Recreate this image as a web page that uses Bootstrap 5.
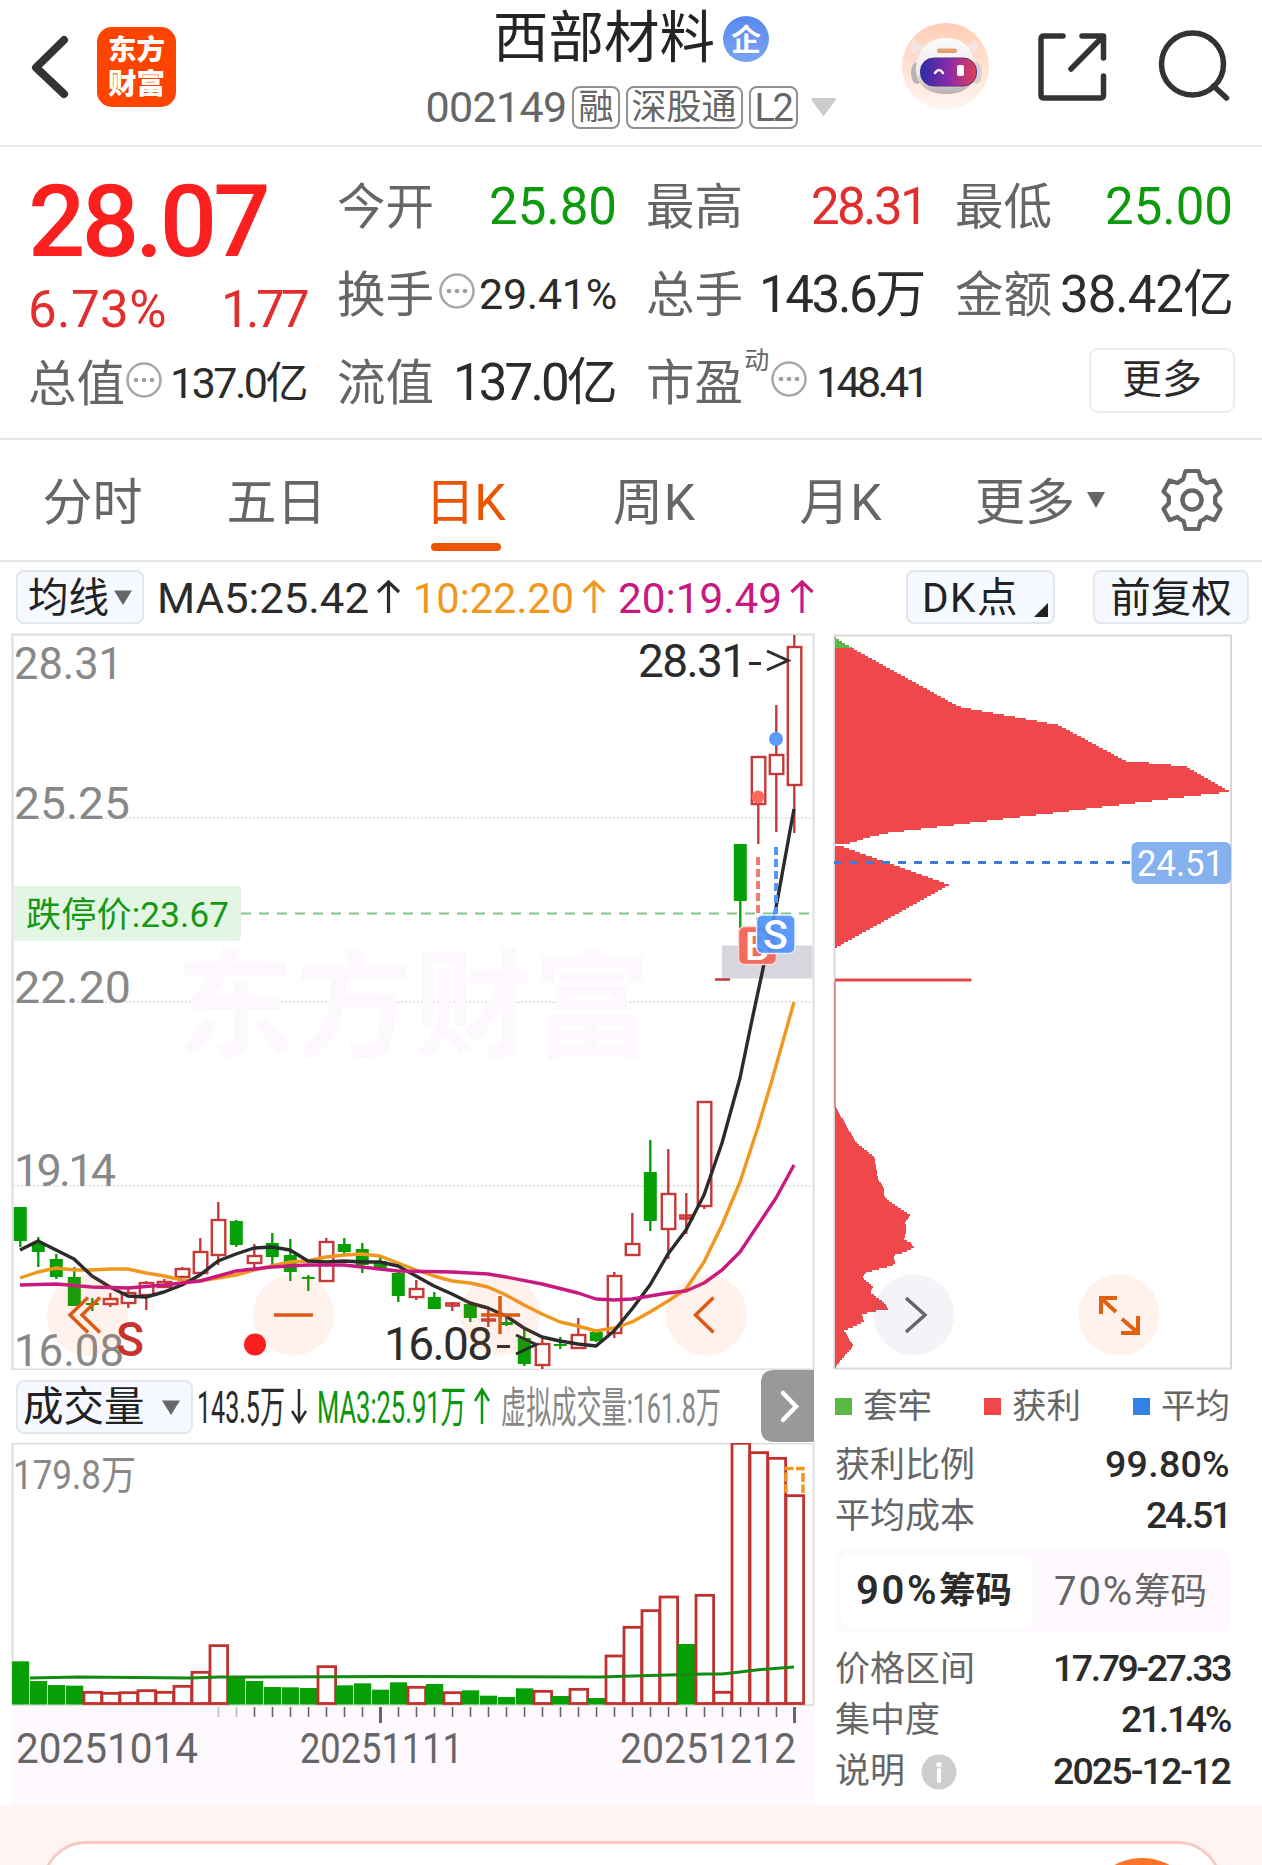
<!DOCTYPE html>
<html lang="zh-CN">
<head>
<meta charset="utf-8">
<meta name="viewport" content="width=device-width, initial-scale=1">
<title>西部材料 002149</title>
<link rel="stylesheet" href="https://cdn.jsdelivr.net/npm/bootstrap@5.3.0/dist/css/bootstrap.min.css">
<script src="https://cdn.jsdelivr.net/npm/bootstrap@5.3.0/dist/js/bootstrap.bundle.min.js"></script>
<style>
body{width:1262px;height:1865px;overflow:hidden;background:#fff;color:#2b2b2b;font-family:Roboto,"Noto Sans CJK SC",sans-serif;line-height:1}
svg{display:block;flex:none}
svg text{font-family:Roboto,"Noto Sans CJK SC",sans-serif}
.num{white-space:nowrap;display:inline-block}
.topbar{height:147px;border-bottom:2px solid #e9e9e9;display:grid;grid-template-columns:430px 402px 1fr}
.top-left{padding:0 0 12px 30px}
.top-mid{padding-top:9px}
.brand{width:79px;height:80px;border-radius:15px;background:#ff4400;color:#fff;font-weight:900;font-size:28.5px;line-height:34px;padding-top:2px}
.stock-name{font-size:55.5px;line-height:60px;color:#242424}
.corp{width:46px;height:46px;border-radius:50%;background:linear-gradient(#5788ee,#7ba4f1);color:#fff;font-size:30px;font-weight:700;padding-top:2px}
.name-row{gap:8px}
.code-row{margin-top:17px;gap:6px}
.stock-code{font-size:43px;color:#666}
.flag{height:43px;border:2px solid #909090;border-radius:8px;color:#666;font-size:35px;padding:0 4px;white-space:nowrap}
.flag-lat{font-size:38px}
.quote{height:293px;border-bottom:2px solid #e6e6ea;padding:18px 0 0 28px;gap:31px}
.q-col{width:278px;flex:none}
.q-cell{display:flex;align-items:center;justify-content:space-between}
.r1{height:82px}.r2{height:94px}.r3{height:82px}
.lbl{font-size:48.5px;color:#666;padding-top:4px}
.v-lg{font-size:51px}.v-md{font-size:43px}
.q-out{margin-right:-2px}
.up{color:#e12e2e}.down{color:#0d9a0d}
.big-price{font-size:101px;font-weight:500;color:#fa2020;height:110px;padding-top:2px}
.chg{height:68px}.cap-row{height:80px}
.more-btn{width:146px;height:65px;border:2px solid #ececf2;border-radius:9px;font-size:40px;color:#2b2b2b;background:#fff;padding:0;margin-bottom:4px}
.dyn{font-size:25px;color:#666;align-self:flex-start;margin-top:7px}
.tabs{height:122px;border-bottom:2px solid #e6e6ea;display:grid;grid-template-columns:185px 183px 194px 185px 188px 212px 90px;font-size:50px;color:#666}
.tabs>*{display:flex;align-items:center;justify-content:center;position:relative;padding-top:6px}
.tabs>.gear{padding-top:0}
.tabs .on{color:#ea5504}
.tabs .on::after{content:"";position:absolute;left:63px;bottom:9px;width:70px;height:8px;border-radius:4px;background:#ea5504}
.ind{height:66px;padding:4px 13px 0 16px;font-size:42px}
.pill{height:54px;border:2px solid #e4e6ee;border-radius:8px;background:#f6f9ff;font-size:40.5px;color:#222;display:flex;align-items:center;padding:2px 0 0;flex:none}
.pill-ma{width:128px;padding-left:10px}
.pill-dk{width:149px;margin-left:82px;padding-left:14px}
.pill-dk svg{margin:26px 0 0 14px}
.pill-fq{width:156px}
.pill-vol{width:177px;padding-left:5px}
.left-col{width:826px;flex:none}
.right-col{width:436px;flex:none}
.vol-head{height:73px;padding-left:16px}
.side{padding:0 32px 0 9px}
.side .line{height:51.2px;display:flex;align-items:center;justify-content:space-between;font-size:35px;color:#666;padding-top:3px}
.side .val{font-size:37.5px;font-weight:500;color:#2b2b2b;margin-top:-1px}
.legend-row{height:68px;padding-top:5px;font-size:34.5px;color:#666}
.sq{width:17px;height:17px;display:inline-block;margin-right:11px}
.seg{height:84px;margin:9px 0;background:#fdf9fe;border-radius:10px;padding:6px;font-size:36.5px;color:#666}
.seg .on{width:191px;background:#fff;border-radius:8px;font-weight:600;color:#2b2b2b;padding-right:5px}
.seg .pct{font-size:40px}
.seg .off{padding:2px 0 0 5px}
.foot{height:60px;background:#fff3f3;overflow:hidden;padding:36px 40px 0 42px}
.foot-card{height:100px;border:3px solid #f6c9c2;border-radius:44px;background:#fff;padding:14px 20px}
.fab{width:114px;height:114px;border-radius:50%;background:#fb7429}
</style>
</head>
<body>
<header class="topbar">
  <div class="top-left d-flex align-items-center">
    <svg width="67" height="80"><path d="M34 13L6 40.500L34 67" fill="none" stroke="#333" stroke-width="8" stroke-linecap="round" stroke-linejoin="round"/></svg>
    <div class="brand d-flex flex-column align-items-center justify-content-center"><span>东方</span><span>财富</span></div>
  </div>
  <div class="top-mid d-flex flex-column align-items-center">
    <div class="name-row d-flex align-items-center"><span class="stock-name">西部材料</span><span class="corp d-flex align-items-center justify-content-center">企</span></div>
    <div class="code-row d-flex align-items-center">
      <span class="stock-code num" data-w="141">002149</span>
      <span class="flag d-flex align-items-center">融</span>
      <span class="flag d-flex align-items-center">深股通</span>
      <span class="flag d-flex align-items-center"><span class="num flag-lat" data-w="37">L2</span></span>
      <svg width="33" height="20" viewBox="-7 0 33 20"><path d="M1 1H24L12.500 17Z" fill="#ccc" stroke="#ccc" stroke-width="2" stroke-linejoin="round"/></svg>
    </div>
  </div>
  <svg width="430" height="145" viewBox="832 0 430 145">
    <defs>
      <linearGradient id="halo" x1="0" y1="0" x2="0" y2="1"><stop offset="0" stop-color="#ffcdb5"/><stop offset="1" stop-color="#fff6f2"/></linearGradient>
      <linearGradient id="visor"><stop offset="0" stop-color="#2a2ba8"/><stop offset=".5" stop-color="#8a2ba8"/><stop offset="1" stop-color="#e04055"/></linearGradient>
      <linearGradient id="shell" x1="0" y1="0" x2="0" y2="1"><stop offset="0" stop-color="#fdfbfb"/><stop offset=".6" stop-color="#efeaeb"/><stop offset="1" stop-color="#b9aeb2"/></linearGradient>
    </defs>
    <circle cx="945.500" cy="66.500" r="43.500" fill="url(#halo)"/>
    <path d="M913 39q-5 10 1 15l12-9q-9 1-13-6M975 39q5 10 0 15l-12-9q9 1 12-6" fill="#f2e5e2"/>
    <ellipse cx="917" cy="73" rx="6" ry="11" fill="#b9b1b8"/><ellipse cx="976" cy="73" rx="6" ry="11" fill="#d9cfd2"/>
    <path d="M946 38C930 38 919 47 916 66C914 84 928 94 946 94C966 94 977 84 975 66C973 47 962 38 946 38Z" fill="url(#shell)"/>
    <rect x="937" y="48.500" width="20" height="4.500" rx="2" fill="#e0a070"/>
    <rect x="920.500" y="58" width="56" height="28" rx="13" fill="url(#visor)" stroke="#54387e" stroke-width="1"/>
    <path d="M935 73q4-6 8 0" fill="none" stroke="#fff" stroke-width="2.500" stroke-linecap="round"/><rect x="957" y="65" width="7" height="11" rx="2" fill="#fff"/>
    <g fill="none" stroke="#333" stroke-width="5.500" stroke-linecap="round" stroke-linejoin="round">
      <path d="M1063 36H1044Q1041 36 1041 39V95Q1041 98 1044 98H1100Q1103.500 98 1103.500 95V76"/>
      <path d="M1082 36H1103.500V58M1102 37.500L1071 69"/>
      <circle cx="1192.500" cy="64" r="31"/><path d="M1213.500 86L1226.500 98"/>
    </g>
  </svg>
</header>

<section class="quote d-flex">
  <div class="q-col">
    <div class="q-cell big-price"><span class="num" data-w="239">28.07</span></div>
    <div class="q-cell chg up v-lg"><span class="num" data-w="139">6.73%</span><span class="num" data-w="85">1.77</span></div>
    <div class="q-cell cap-row"><span class="lbl">总值</span><svg width="36" height="44"><use href="#dots"/></svg><span class="num v-md ms-2" data-w="136">137.0亿</span></div>
  </div>
  <div class="q-col">
    <div class="q-cell r1"><span class="lbl">今开</span><span class="num v-lg down q-out" data-w="128">25.80</span></div>
    <div class="q-cell r2"><span class="lbl">换手</span><svg width="36" height="44"><use href="#dots"/></svg><span class="num v-md q-out" data-w="138">29.41%</span></div>
    <div class="q-cell r3"><span class="lbl">流值</span><span class="num v-lg" data-w="162">137.0亿</span></div>
  </div>
  <div class="q-col">
    <div class="q-cell r1"><span class="lbl">最高</span><span class="num v-lg up q-out" data-w="115">28.31</span></div>
    <div class="q-cell r2"><span class="lbl">总手</span><span class="num v-lg" data-w="165">143.6万</span></div>
    <div class="q-cell r3"><span class="lbl">市盈</span><span class="dyn">动</span><svg width="36" height="44"><use href="#dots"/></svg><span class="num v-md q-out ms-2" data-w="110">148.41</span></div>
  </div>
  <div class="q-col">
    <div class="q-cell r1"><span class="lbl">最低</span><span class="num v-lg down" data-w="128">25.00</span></div>
    <div class="q-cell r2"><span class="lbl">金额</span><span class="num v-lg" data-w="173">38.42亿</span></div>
    <div class="q-cell r3 justify-content-end"><button class="more-btn q-out">更多</button></div>
  </div>
</section>
<svg width="0" height="0" class="position-absolute"><defs><g id="dots"><circle cx="18" cy="19" r="16.500" fill="none" stroke="#a8a8a8" stroke-width="2.500"/><circle cx="10" cy="19" r="2.300" fill="#a0a0a0"/><circle cx="18" cy="19" r="2.300" fill="#a0a0a0"/><circle cx="26" cy="19" r="2.300" fill="#a0a0a0"/></g></defs></svg>

<nav class="tabs">
  <span>分时</span><span>五日</span><span class="on"><span class="num" data-w="80">日K</span></span><span><span class="num" data-w="83">周K</span></span><span><span class="num" data-w="83">月K</span></span>
  <span>更多<svg width="28" height="20" class="ms-1 mb-1"><path d="M8 1H26L17 17Z" fill="#666"/></svg></span>
  <span class="gear"><svg width="64" height="76" viewBox="-32 -38 64 76"><path d="M-6.500-29H6.500L9-20.500Q12-19 14.500-17L22.500-19.500L28.500-8.500L23-3Q23.500 0 23 3L28.500 9L22.500 20L14.500 17Q12 20 8.500 21L6.500 29H-6.500L-8.500 21Q-12 20-14.500 17L-22.500 20L-28.500 9L-23 3Q-23.500 0-23-3L-28.500-8.500L-22.500-19.500L-14.500-17Q-12-19-9-20.500Z" fill="none" stroke="#666" stroke-width="4.200" stroke-linejoin="round"/><circle r="9.500" fill="none" stroke="#666" stroke-width="4.500"/></svg></span>
</nav>

<div class="ind d-flex align-items-center">
  <div class="pill pill-ma">均线<svg width="20" height="18" class="ms-1"><path d="M1 1.500H19L10 16Z" fill="#666"/></svg></div>
  <svg width="680" height="54" viewBox="144 571 680 54" font-size="42.500">
    <text x="157" y="613.500" textLength="212" lengthAdjust="spacingAndGlyphs" fill="#2b2b2b">MA5:25.42</text><text x="413" y="613.500" textLength="161" lengthAdjust="spacingAndGlyphs" fill="#f0981e">10:22.20</text><text x="618" y="613.500" textLength="164" lengthAdjust="spacingAndGlyphs" fill="#c9187f">20:19.49</text>
    <g fill="none" stroke-width="3.200"><path d="M388.500 614V583M378 593L388.500 583L399 593" stroke="#2b2b2b"/><path d="M594 614V583M583.500 593L594 583L604.500 593" stroke="#f0981e"/><path d="M802 614V583M791.500 593L802 583L812.500 593" stroke="#c9187f"/></g>
  </svg>
  <div class="pill pill-dk"><span class="num" data-w="97">DK点</span><svg width="16" height="16"><path d="M15 0V14H1Z" fill="#222"/></svg></div>
  <div class="pill pill-fq justify-content-center ms-auto">前复权</div>
</div>

<main class="d-flex">
  <div class="left-col">
    <svg width="826" height="742" viewBox="0 628 826 742">
      <rect x="12.500" y="634.500" width="801" height="735" fill="#fff" stroke="#dedede" stroke-width="2"/>
      <g stroke="#dcdcdc" stroke-width="1.500" stroke-dasharray="2 2"><path d="M13 818H812M13 1002H812M13 1186H812"/></g>
      <text x="176" y="1048" font-size="118" font-weight="700" fill="#fdf8fe" textLength="475">东方财富</text>
      <rect x="722" y="945.500" width="90.500" height="33" fill="#d6d6df"/>
      <path d="M241 913.500H812" stroke="#80c488" stroke-width="2" stroke-dasharray="10 8"/>
      <g id="candles"></g>
      <g fill="none" stroke-width="3.400" stroke-linejoin="round">
        <polyline stroke="#f0981e" points="20,1278 38,1272 56,1268 74,1270 92,1270 110,1269 128,1269 146,1273 164,1276 182,1280 200,1281 218,1278 236,1275 254,1270 272,1266 290,1262 308,1261 326,1257 344,1255 362,1254 380,1256 398,1263 416,1270 434,1276 452,1281 470,1283 488,1287 506,1295 524,1305 542,1314 560,1322 578,1326 596,1331 614,1328 632,1322 650,1312 668,1301 686,1289 704,1262 722,1225 740,1182 758,1127 772,1080 794,1002"/>
        <polyline stroke="#2b2b2b" points="20,1250 38,1241 56,1250 74,1259 92,1276 110,1287 128,1296 146,1297 164,1292 182,1285 200,1275 218,1261 236,1254 254,1248 272,1247 290,1250 308,1261 326,1262 344,1261 362,1262 380,1262 398,1266 416,1276 434,1286 452,1294 470,1303 488,1308 506,1316 524,1328 542,1337 560,1341 578,1344 596,1346 614,1331 632,1309 650,1285 668,1254 686,1230 704,1195 722,1143 740,1078 752,1020 775,913 794,809"/>
        <polyline stroke="#c9187f" points="20,1285 56,1284 92,1287 128,1288 164,1285 182,1283 200,1281 236,1271 272,1267 308,1265 344,1265 380,1269 398,1271 452,1272 488,1274 506,1277 542,1284 578,1293 596,1299 614,1300 632,1299 668,1293 686,1291 704,1283 722,1270 740,1252 776,1198 794,1165"/>
      </g>
      <path d="M758 857V926" stroke="#ee7c70" stroke-width="4" stroke-dasharray="8 4"/>
      <path d="M776 847V914" stroke="#4f96f5" stroke-width="4" stroke-dasharray="8 4"/>
      <circle cx="758" cy="797" r="6.500" fill="#fc6a5c"/><circle cx="776" cy="739" r="7" fill="#5a9bfb"/>
      <rect x="738.500" y="926.500" width="38" height="38" rx="6" fill="#f36a5e" stroke="#f9d8d6" stroke-width="1.500"/><text x="745" y="960" font-size="39" font-weight="500" fill="#fff">B</text>
      <rect x="756.500" y="915" width="38.500" height="38.500" rx="6" fill="#4a90fb" fill-opacity=".9" stroke="#e4effd" stroke-width="1.500"/><text x="763" y="949" font-size="41" font-weight="500" fill="#fff">S</text>
      <g font-size="45" fill="#888"><text x="14" y="679" textLength="109" lengthAdjust="spacingAndGlyphs">28.31</text><text x="14" y="819" textLength="116" lengthAdjust="spacingAndGlyphs">25.25</text><text x="14" y="1003" textLength="117" lengthAdjust="spacingAndGlyphs">22.20</text><text x="14" y="1186" textLength="102">19.14</text><text x="14" y="1366" textLength="110" lengthAdjust="spacingAndGlyphs">16.08</text></g>
      <g font-size="46" fill="#2b2b2b"><text x="638" y="677" textLength="109">28.31</text><text x="384" y="1360" textLength="109">16.08</text></g>
      <g fill="none" stroke="#2b2b2b" stroke-width="3"><path d="M749 663.500H761M767 651L788 660.500L767 670"/><path d="M497 1346.500H510M516 1335L536 1344.500L516 1354"/></g>
      <path d="M13 886H236Q241 886 241 891V936Q241 941 236 941H13Z" fill="#e3f6e3"/>
      <text x="26" y="927" font-size="35" fill="#159815" textLength="203">跌停价:23.67</text>
      <g fill="#fb6a2e" fill-opacity=".09"><circle cx="87.500" cy="1315" r="40.500"/><circle cx="293.500" cy="1315" r="40.500"/><circle cx="500" cy="1315" r="40.500"/><circle cx="706.500" cy="1315" r="40.500"/></g>
      <g fill="none" stroke="#dc5a14" stroke-width="3.500"><path d="M88 1297.500L70 1315L88 1332.500M100 1297.500L82 1315L100 1332.500M274 1315H313M481 1315H520M500 1296V1334M713.500 1297.500L695.500 1315L713.500 1332.500"/></g>
      <text x="116" y="1356" font-size="49" font-weight="500" fill="#c8332f" textLength="28" lengthAdjust="spacingAndGlyphs">S</text><circle cx="255" cy="1344.500" r="11" fill="#fa1e1e"/>
    </svg>
    <div class="vol-head d-flex align-items-center">
      <div class="pill pill-vol"><span>成交量</span><svg width="20" height="18" class="ms-3"><path d="M1 1.500H19L10 16Z" fill="#666"/></svg></div>
      <svg width="633" height="73" viewBox="193 1370 633 73" font-size="44">
        <text x="197" y="1422.500" textLength="88" lengthAdjust="spacingAndGlyphs" fill="#2b2b2b">143.5万</text>
        <text x="317" y="1422.500" textLength="149" lengthAdjust="spacingAndGlyphs" fill="#0d960d">MA3:25.91万</text>
        <text x="501" y="1422.500" textLength="220" lengthAdjust="spacingAndGlyphs" font-size="43" fill="#888">虚拟成交量:161.8万</text>
        <path d="M299 1389V1422M292 1411L299 1422L306 1411" fill="none" stroke="#2b2b2b" stroke-width="2.500"/><path d="M482 1424V1389M475 1401L482 1389.500L489 1401" fill="none" stroke="#0d960d" stroke-width="2.500"/>
        <path d="M814 1370V1442H774Q761 1442 761 1429V1383Q761 1370 774 1370Z" fill="#9b989b"/><path d="M783 1393L796 1406.500L783 1420" fill="none" stroke="#fff" stroke-width="4.500" stroke-linecap="round"/>
      </svg>
    </div>
    <svg width="826" height="362" viewBox="0 1443 826 362">
      <rect x="12" y="1705" width="802" height="100" fill="#fdf9fe"/>
      <rect x="12.500" y="1443.500" width="801" height="261.500" fill="#fff" stroke="#dedede" stroke-width="2"/>
      <g id="volume"></g>
      <polyline points="30,1678 80,1677 190,1678 220,1677 400,1676.500 600,1677 650,1675.500 704,1674 722,1674 740,1672 756,1670 794,1667" fill="none" stroke="#128a12" stroke-width="3"/>
      <text x="13" y="1489" font-size="40" fill="#888" textLength="123" lengthAdjust="spacingAndGlyphs">179.8万</text>
      <g font-size="42.500" fill="#666"><text x="16" y="1763" textLength="182" lengthAdjust="spacingAndGlyphs">20251014</text><text x="300" y="1763" textLength="163" lengthAdjust="spacingAndGlyphs">20251111</text><text x="620" y="1763" textLength="176" lengthAdjust="spacingAndGlyphs">20251212</text></g>
    </svg>
  </div>

  <div class="right-col">
    <svg width="436" height="742" viewBox="826 628 436 742">
      <rect x="834.500" y="635.500" width="396.500" height="733" fill="#fff" stroke="#d8d8d8" stroke-width="2"/>
      <g id="chips" shape-rendering="crispEdges"></g>
      <path d="M835 980H971.500" stroke="#e04a4c" stroke-width="3"/><path d="M835 981V1108" stroke="#d87a7c" stroke-width="1.500"/>
      <path d="M834 862.500H1131" stroke="#3c7cd2" stroke-width="3" stroke-dasharray="8 8"/>
      <rect x="1131.500" y="842" width="99.500" height="42" rx="6" fill="#85b1ee"/>
      <text x="1137" y="876" font-size="37" fill="#fff" textLength="87" lengthAdjust="spacingAndGlyphs">24.51</text>
      <circle cx="914" cy="1315" r="40.500" fill="#7a5fa0" fill-opacity=".08"/><path d="M906 1298L925 1315L906 1332" fill="none" stroke="#666" stroke-width="3.500"/>
      <circle cx="1119" cy="1315" r="40.500" fill="#fb6a2e" fill-opacity=".09"/>
      <path d="M1101 1314V1298H1117M1102 1299L1116 1312M1121 1333H1138V1316M1137 1332L1122 1319" fill="none" stroke="#e2600f" stroke-width="4"/>
    </svg>
    <div class="side">
      <div class="legend-row d-flex align-items-center justify-content-between">
        <span class="d-flex align-items-center"><i class="sq" style="background:#5cb845"></i>套牢</span>
        <span class="d-flex align-items-center"><i class="sq" style="background:#ef474a"></i>获利</span>
        <span class="d-flex align-items-center"><i class="sq" style="background:#3381e6"></i>平均</span>
      </div>
      <div class="line"><span>获利比例</span><span class="val num" data-w="125">99.80%</span></div>
      <div class="line"><span>平均成本</span><span class="val num" data-w="84">24.51</span></div>
      <div class="seg d-flex"><span class="on d-flex align-items-center justify-content-center"><span class="num pct" data-w="83">90%</span>筹码</span><span class="off d-flex flex-fill align-items-center justify-content-center"><span class="num pct" data-w="80">70%</span>筹码</span></div>
      <div class="line"><span>价格区间</span><span class="val num" data-w="177">17.79-27.33</span></div>
      <div class="line"><span>集中度</span><span class="val num" data-w="109">21.14%</span></div>
      <div class="line"><span class="d-flex align-items-center">说明<svg width="36" height="36" class="ms-3"><circle cx="18" cy="18" r="17.500" fill="#cdcdcd"/><circle cx="18" cy="10.500" r="2.600" fill="#fff"/><path d="M18 16V27" stroke="#fff" stroke-width="4.200" stroke-linecap="round"/></svg></span><span class="val num" data-w="177">2025-12-12</span></div>
    </div>
  </div>
</main>
<footer class="foot"><div class="foot-card d-flex justify-content-end"><div class="fab"></div></div></footer>

<script>
// Spread characters so each figure fills its reserved column width.
document.querySelectorAll('.num[data-w]').forEach(function (el) {
  var gap = (el.dataset.w - el.getBoundingClientRect().width) / el.textContent.length;
  el.style.letterSpacing = gap + 'px';
});
var NS = 'http://www.w3.org/2000/svg';
function add(parent, tag, attrs) {
  var n = document.createElementNS(NS, tag);
  for (var k in attrs) n.setAttribute(k, attrs[k]);
  document.getElementById(parent).appendChild(n);
}
var RED = '#c53a38', GREEN = '#06a006';
// [direction, body top, body bottom, wick top, wick bottom]
var K = [['g',1207,1241,1207,1247],['g',1243,1252,1237,1267],['g',1259,1277,1254,1279],['g',1277,1306,1267,1306],['g',1303,1305,1298,1311],['r',1299,1304,1293,1307],['r',1293,1303,1287,1308],['r',1283,1295,1281,1310],['r',1282,1287,1279,1287],['r',1269,1277,1267,1278],['r',1252,1273,1238,1273],['r',1220,1255,1202,1265],['g',1221,1245,1220,1247],['r',1256,1263,1244,1269],['g',1243,1257,1233,1265],['g',1255,1272,1239,1281],['g',1277,1279,1275,1291],['r',1242,1281,1238,1281],['g',1244,1252,1238,1254],['g',1249,1265,1243,1273],['g',1261,1268,1257,1268],['g',1273,1296,1270,1302],['r',1289,1297,1280,1300],['g',1297,1309,1292,1309],['r',1303,1306,1302,1311],['g',1304,1318,1304,1322],['r',1319,1321,1310,1327],['g',1322,1325,1318,1326],['g',1338,1364,1329,1366],['r',1344,1365,1339,1369],['g',1344,1346,1337,1349],['r',1335,1348,1318,1349],['g',1332,1341,1330,1342],['r',1276,1333,1272,1338],['r',1244,1255,1213,1255],['g',1172,1221,1140,1231],['r',1194,1229,1149,1259],['r',1215,1219,1193,1234],['r',1102,1206,1102,1209],['r',979,980,979,980],['g',844,901,844,946],['r',757,804,757,844],['r',755,774,705,832],['r',647,785,635,833]];
K.forEach(function (k, i) {
  var x = 20.3 + 18 * i, c = k[0] === 'g' ? GREEN : RED, h = k[2] - k[1], thin = h < 5;
  if (k[0] === 'g') add('candles', 'rect', {x: x - 6.5, y: k[1], width: 13, height: Math.max(2, h), fill: c});
  else add('candles', 'rect', {x: x - 6.5, y: k[1], width: 13.5, height: h, fill: thin ? '#e04a48' : '#fff', stroke: c, 'stroke-width': thin ? 1.5 : 2.4});
  add('candles', 'path', {d: thin ? 'M' + x + ' ' + k[3] + 'V' + k[4] : 'M' + x + ' ' + k[3] + 'V' + k[1] + 'M' + x + ' ' + k[2] + 'V' + k[4], stroke: c, 'stroke-width': 2.4});
});
var V = [784,843,855,857,877,880,878,872,877,859,817,737,832,843,861,862,864,800,856,850,869,847,862,852,878,871,887,891,865,874,888,868,894,768,682,632,591,732,586,877,130,158,175,287];
var volGreen = [0,1,2,3,12,13,14,15,16,18,19,20,21,23,25,26,27,28,30,32,37];
V.forEach(function (v, i) {
  var x = 20.5 + 18 * i, y = 1400 + v / 3;
  if (volGreen.indexOf(i) >= 0) add('volume', 'rect', {x: x - 8.5, y: y, width: 17.2, height: 1704.5 - y, fill: GREEN});
  else add('volume', 'rect', {x: x - 8.5, y: y, width: 17.6, height: 1703.5 - y, fill: '#fff', stroke: '#c0322f', 'stroke-width': 2.8});
});
add('volume', 'path', {d: 'M786 1493V1468.500H803V1493', fill: 'none', stroke: '#f0981e', 'stroke-width': 3.4, 'stroke-dasharray': '9 2.500'});
for (var i = 11; i < 44; i++) {
  var big = i === 20 || i === 43;
  add('volume', 'path', {d: 'M' + (20.5 + 18 * i) + ' 1707V' + (big ? 1723 : 1717), stroke: i < 13 ? '#bbb' : '#666', 'stroke-width': big ? 3 : 1.6});
}
// Chip distribution: outline of [extent, price row], drawn as two-pixel steps.
function chips(src, color) {
  var pts = src.map(function (q) { return [(q[0] - 44) / 3, 620 + q[1] / 2.064]; });
  for (var y = pts[0][1]; y < pts[pts.length - 1][1]; y += 2) {
    for (var j = 0; j < pts.length - 2 && pts[j + 1][1] <= y; j++);
    var a = pts[j], b = pts[j + 1], w = a[0] + (b[0] - a[0]) * Math.min(1, (y - a[1]) / (b[1] - a[1]));
    add('chips', 'rect', {x: 835, y: Math.round(y), width: Math.max(1, w), height: 2, fill: color});
  }
}
chips([[46,35],[100,58]], '#5cb845');
chips([[100,58],[415,177],[715,215],[915,289],[1095,300],[1230,353],[1170,357],[200,438],[155,445],[70,462]], '#ef474a');
chips([[70,467],[387,545],[44,676]], '#ef474a');
chips([[46,1003],[107,1076],[162,1106],[173,1150],[190,1172],[190,1186],[205,1197],[270,1227],[255,1240],[258,1255],[252,1277],[270,1283],[282,1293],[250,1303],[218,1310],[226,1322],[218,1330],[140,1344],[125,1355],[160,1375],[148,1385],[197,1410],[203,1420],[150,1426],[125,1432],[131,1446],[72,1465],[99,1496],[75,1515],[44,1540]], '#ef474a');
</script>
</body>
</html>
